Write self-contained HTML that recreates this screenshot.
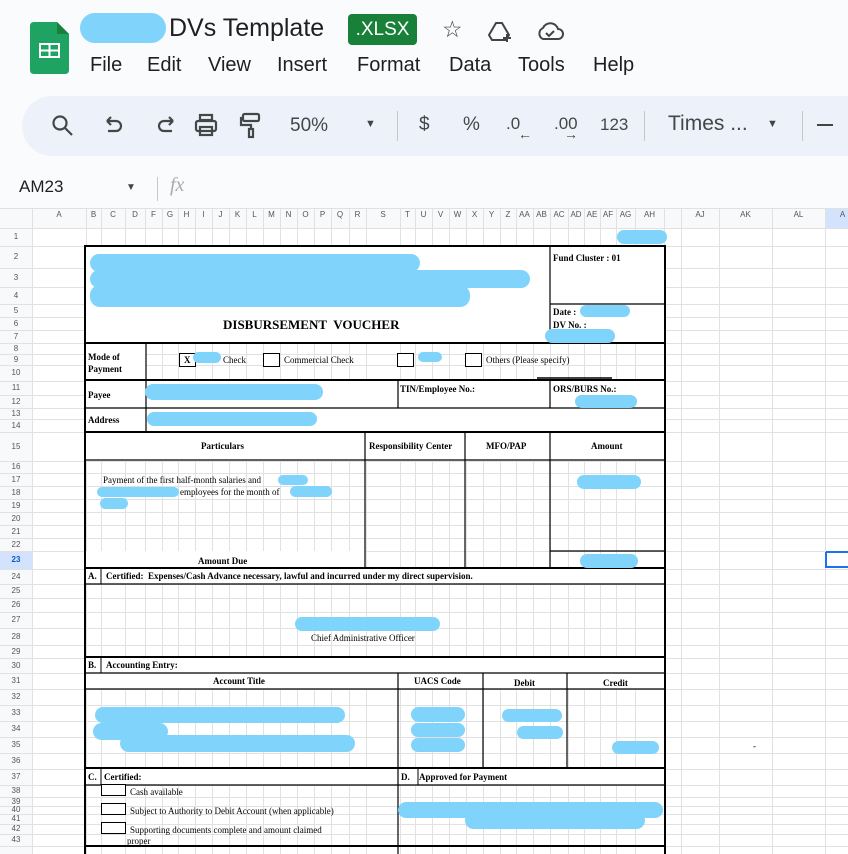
<!DOCTYPE html>
<html><head><meta charset="utf-8"><style>
*{margin:0;padding:0;box-sizing:border-box}
body{width:848px;height:854px;overflow:hidden;background:#f9fbfd;font-family:"Liberation Sans",sans-serif;position:relative}
.a{position:absolute;white-space:nowrap}
.m{font-size:20px;color:#1f1f1f;top:54px}
.tb{font-size:19px;color:#444746;top:114px}
.s{font-family:"Liberation Serif",serif;font-size:9px;color:#000}
.b{font-weight:bold}
.blob{position:absolute;background:#80d4fb;border-radius:10px}
.ch{position:absolute;top:210px;font-size:8px;color:#555;text-align:center}
.rh{position:absolute;left:0;width:32px;font-size:8px;color:#555;text-align:center}
.cb{position:absolute;width:17px;height:14px;border:1px solid #000;background:#fff}
</style></head><body>
<svg class="a" style="left:30px;top:22px" width="39" height="52" viewBox="0 0 39 52"><path d="M4 0H27L39 12V48Q39 52 35 52H4Q0 52 0 48V4Q0 0 4 0Z" fill="#1ea362"/><path d="M27 0V12H39Z" fill="#188038"/><rect x="9" y="21" width="21" height="15" fill="#fff"/><rect x="11" y="23" width="7.5" height="4.5" fill="#1ea362"/><rect x="20.5" y="23" width="7.5" height="4.5" fill="#1ea362"/><rect x="11" y="29.5" width="7.5" height="4.5" fill="#1ea362"/><rect x="20.5" y="29.5" width="7.5" height="4.5" fill="#1ea362"/></svg>
<div class="blob" style="left:80px;top:13px;width:86px;height:30px;border-radius:15px"></div>
<div class="a" style="left:169px;top:14px;font-size:25px;color:#1f1f1f">DVs Template</div>
<div class="a" style="left:348px;top:14px;width:69px;height:31px;background:#188038;border-radius:4px;color:#fff;font-size:19px;text-align:center;line-height:31px">.XLSX</div>
<div class="a" style="left:442px;top:16px;font-size:23px;color:#444">☆</div>
<svg class="a" style="left:487px;top:20px" width="28" height="24" viewBox="0 0 28 24" fill="none" stroke="#444" stroke-width="2"><path d="M9 3h6l7 12-3 5H5l-3-5z"/><path d="M20 14v8M16 18h8"/></svg>
<svg class="a" style="left:535px;top:20px" width="30" height="22" viewBox="0 0 30 22" fill="none" stroke="#444" stroke-width="2"><path d="M8 19h15a5 5 0 0 0 0-10 8 8 0 0 0-15-1 6 6 0 0 0 0 11z"/><path d="M11 13l3 3 5-5"/></svg>
<div class="a m" style="left:90px">File</div><div class="a m" style="left:147px">Edit</div><div class="a m" style="left:208px">View</div><div class="a m" style="left:277px">Insert</div><div class="a m" style="left:357px">Format</div><div class="a m" style="left:449px">Data</div><div class="a m" style="left:518px">Tools</div><div class="a m" style="left:593px">Help</div>
<div class="a" style="left:22px;top:96px;width:880px;height:60px;background:#edf2fa;border-radius:30px"></div>
<svg class="a" style="left:50px;top:112px" width="300" height="30" viewBox="0 0 300 28" fill="none" stroke="#444746" stroke-width="2.2">
<circle cx="10" cy="10" r="6.5"/><path d="M15 15l7 7"/>
<path d="M57 8h9a5 5 0 0 1 0 10h-8M57 8l4-4M57 8l4 4"/>
<path d="M123 8h-9a5 5 0 0 0 0 10h8M123 8l-4-4M123 8l-4 4"/>
<rect x="150" y="2" width="12" height="5"/><rect x="146" y="8" width="20" height="10" rx="2"/><rect x="150" y="14" width="12" height="8"/>
<rect x="193" y="1" width="16" height="7" rx="1.5"/><path d="M193 5h-2v7h10v4"/><rect x="199" y="16" width="4" height="8"/>
</svg>
<div class="a tb" style="left:290px;top:115px">50%</div>
<div class="a" style="left:365px;top:118px;font-size:11px;color:#444">▼</div>
<div class="a" style="left:397px;top:111px;width:1px;height:30px;background:#c7c7c7"></div>
<div class="a tb" style="left:419px">$</div><div class="a tb" style="left:463px">%</div>
<div class="a tb" style="left:506px;font-size:17px">.0</div><div class="a" style="left:518px;top:126px;font-size:14px;color:#444">←</div>
<div class="a tb" style="left:554px;font-size:17px">.00</div><div class="a" style="left:564px;top:126px;font-size:14px;color:#444">→</div>
<div class="a tb" style="left:600px;font-size:17px;top:115px">123</div>
<div class="a" style="left:644px;top:111px;width:1px;height:30px;background:#c7c7c7"></div>
<div class="a tb" style="left:668px;font-size:21px;top:112px">Times ...</div>
<div class="a" style="left:767px;top:118px;font-size:11px;color:#444">▼</div>
<div class="a" style="left:802px;top:111px;width:1px;height:30px;background:#c7c7c7"></div>
<div class="a" style="left:817px;top:124px;width:16px;height:2px;background:#444"></div>
<div class="a" style="left:19px;top:177px;font-size:17px;color:#1f1f1f">AM23</div>
<div class="a" style="left:126px;top:182px;font-size:10px;color:#444">▼</div>
<div class="a" style="left:157px;top:177px;width:1px;height:24px;background:#c7c7c7"></div>
<div class="a" style="left:170px;top:174px;font-size:20px;color:#aaa;font-family:'Liberation Serif',serif;font-style:italic">fx</div>
<div class="a" style="left:0;top:208px;width:848px;height:646px;background:#fff"></div>
<div class="a" style="left:0;top:208px;width:848px;height:20px;background:#f8f9fa"></div>
<div class="a" style="left:0;top:208px;width:32px;height:646px;background:#f8f9fa"></div>
<div class="a" style="left:825px;top:208px;width:23px;height:20px;background:#d3e3fd"></div>
<div class="a" style="left:0;top:551px;width:32px;height:18px;background:#d3e3fd"></div>
<svg class="a" style="left:0;top:0" width="848" height="854" id="g"></svg>
<script>
var xs=[32,86,101,125,145,162,178,195,212,229,246,263,280,297,314,331,349,366,400,415,432,449,466,483,500,516,533,550,568,584,600,616,635,664,681,719,772,825];
var ys=[208,228,246,268,287,304,317,330,343,354,365,381,395,408,419,432,461,473,486,499,512,525,538,551,569,584,598,612,628,645,658,673,689,705,721,737,753,769,785,797,806,814,824,834,846];
var s='';xs.forEach(function(x){s+='<line x1="'+(x+.5)+'" y1="208" x2="'+(x+.5)+'" y2="854" stroke="#e1e1e1"/>'});
ys.forEach(function(y){s+='<line x1="0" y1="'+(y+.5)+'" x2="848" y2="'+(y+.5)+'" stroke="#e1e1e1"/>'});
var W=[[86,246,464,97],[550,246,115,58],[550,304,115,39],[86,343,60,37],[86,381,579,51],[86,432,579,29],[86,551,279,17],[86,569,579,15],[86,658,579,31],[86,769,579,16]];
W.forEach(function(r){s+='<rect x="'+r[0]+'" y="'+r[1]+'" width="'+r[2]+'" height="'+r[3]+'" fill="#fff"/>'});
function L(x1,y1,x2,y2,w,c){s+='<line x1="'+x1+'" y1="'+y1+'" x2="'+x2+'" y2="'+y2+'" stroke="'+(c||'#000')+'" stroke-width="'+w+'"/>'}
L(85,246,666,246,2);L(85,245,85,854,2);L(665,245,665,854,2);
[343,380,432,568,657,768,846].forEach(function(y){L(85,y,666,y,2)});
L(550,246,550,343,1.2);L(550,304,666,304,1.2);
L(146,343,146,432,1.2);L(398,380,398,408,1.2);L(550,380,550,408,1.2);L(85,408,666,408,1.2);
L(365,432,365,568,1.2);L(465,432,465,568,1.2);L(550,432,550,568,1.2);L(85,460,666,460,1.2);L(550,551,666,551,1.2);
L(85,584,666,584,1.2);L(101,568,101,584,1);
L(85,673,666,673,1.2);L(101,657,101,673,1);L(85,689,666,689,1.2);
L(398,673,398,768,1.2);L(483,673,483,768,1.2);L(567,673,567,768,1.2);
L(85,785,666,785,1.2);L(398,768,398,854,1.2);L(101,768,101,785,1);L(418,768,418,785,1);
L(537,378,612,378,1.5);
var B='#1a73e8';L(826,552,848,552,2,B);L(826,552,826,568,2,B);L(826,567,848,567,2,B);
document.getElementById('g').innerHTML=s;
var cols=[['A',32,86],['B',86,101],['C',101,125],['D',125,145],['F',145,162],['G',162,178],['H',178,195],['I',195,212],['J',212,229],['K',229,246],['L',246,263],['M',263,280],['N',280,297],['O',297,314],['P',314,331],['Q',331,349],['R',349,366],['S',366,400],['T',400,415],['U',415,432],['V',432,449],['W',449,466],['X',466,483],['Y',483,500],['Z',500,516],['AA',516,533],['AB',533,550],['AC',550,568],['AD',568,584],['AE',584,600],['AF',600,616],['AG',616,635],['AH',635,664],['AJ',681,719],['AK',719,772],['AL',772,825],['A',825,860]];
var h='';cols.forEach(function(c){h+='<div class="ch" style="left:'+c[1]+'px;width:'+(c[2]-c[1])+'px">'+c[0]+'</div>'});
for(var i=1;i<=43;i++){var t=ys[i],b=ys[i+1];h+='<div class="rh" style="top:'+((t+b)/2-5)+'px;'+(i==23?'color:#0b57d0;font-weight:bold':'')+'">'+i+'</div>'}
document.body.insertAdjacentHTML('beforeend',h);
</script>
<div class="blob" style="left:617px;top:230px;width:50px;height:14px"></div>
<div class="blob" style="left:90px;top:254px;width:330px;height:18px"></div>
<div class="blob" style="left:90px;top:270px;width:440px;height:18px"></div>
<div class="blob" style="left:90px;top:285px;width:380px;height:22px"></div>
<div class="a s b" style="left:553px;top:253px">Fund Cluster : 01</div>
<div class="a s b" style="left:223px;top:317px;font-size:13px">DISBURSEMENT&nbsp; VOUCHER</div>
<div class="a s b" style="left:553px;top:307px">Date :</div>
<div class="blob" style="left:580px;top:305px;width:50px;height:12px"></div>
<div class="a s b" style="left:553px;top:320px">DV No. :</div>
<div class="blob" style="left:545px;top:329px;width:70px;height:14px"></div>
<div class="a s b" style="left:88px;top:351px;line-height:12px">Mode of<br>Payment</div>
<div class="cb" style="left:179px;top:353px"></div><div class="a s b" style="left:184px;top:355px">X</div>
<div class="blob" style="left:193px;top:352px;width:28px;height:11px"></div>
<div class="a s" style="left:223px;top:355px">Check</div>
<div class="cb" style="left:263px;top:353px"></div><div class="a s" style="left:284px;top:355px">Commercial Check</div>
<div class="cb" style="left:397px;top:353px"></div><div class="blob" style="left:418px;top:352px;width:24px;height:10px"></div>
<div class="cb" style="left:465px;top:353px"></div><div class="a s" style="left:486px;top:355px">Others (Please specify)</div>
<div class="a s b" style="left:88px;top:390px">Payee</div>
<div class="blob" style="left:145px;top:384px;width:178px;height:16px"></div>
<div class="a s b" style="left:400px;top:384px">TIN/Employee No.:</div>
<div class="a s b" style="left:553px;top:384px">ORS/BURS No.:</div>
<div class="blob" style="left:575px;top:395px;width:62px;height:13px"></div>
<div class="a s b" style="left:88px;top:415px">Address</div>
<div class="blob" style="left:147px;top:412px;width:170px;height:14px"></div>
<div class="a s b" style="left:201px;top:441px">Particulars</div>
<div class="a s b" style="left:369px;top:441px">Responsibility Center</div>
<div class="a s b" style="left:486px;top:441px">MFO/PAP</div>
<div class="a s b" style="left:591px;top:441px">Amount</div>
<div class="a s" style="left:103px;top:475px">Payment of the first half-month salaries and &nbsp; &nbsp; &nbsp; &nbsp; &nbsp; of</div>
<div class="blob" style="left:278px;top:475px;width:30px;height:10px"></div>
<div class="a s" style="left:180px;top:487px">employees for the month of</div>
<div class="blob" style="left:97px;top:487px;width:82px;height:10px"></div>
<div class="blob" style="left:290px;top:486px;width:42px;height:11px"></div>
<div class="blob" style="left:100px;top:498px;width:28px;height:11px"></div>
<div class="blob" style="left:577px;top:475px;width:64px;height:14px"></div>
<div class="a s b" style="left:198px;top:556px">Amount Due</div>
<div class="blob" style="left:580px;top:554px;width:58px;height:14px"></div>
<div class="a s b" style="left:88px;top:571px">A.</div>
<div class="a s b" style="left:106px;top:571px">Certified:&nbsp; Expenses/Cash Advance necessary, lawful and incurred under my direct supervision.</div>
<div class="blob" style="left:295px;top:617px;width:145px;height:14px"></div>
<div class="a s" style="left:311px;top:633px">Chief Administrative Officer</div>
<div class="a s b" style="left:88px;top:660px">B.</div><div class="a s b" style="left:106px;top:660px">Accounting Entry:</div>
<div class="a s b" style="left:213px;top:676px">Account Title</div>
<div class="a s b" style="left:414px;top:676px">UACS Code</div>
<div class="a s b" style="left:514px;top:678px">Debit</div>
<div class="a s b" style="left:603px;top:678px">Credit</div>
<div class="blob" style="left:95px;top:707px;width:250px;height:16px"></div>
<div class="blob" style="left:93px;top:723px;width:75px;height:17px"></div>
<div class="blob" style="left:120px;top:735px;width:235px;height:17px"></div>
<div class="blob" style="left:411px;top:707px;width:54px;height:15px"></div>
<div class="blob" style="left:411px;top:723px;width:54px;height:14px"></div>
<div class="blob" style="left:411px;top:738px;width:54px;height:14px"></div>
<div class="blob" style="left:502px;top:709px;width:60px;height:13px"></div>
<div class="blob" style="left:517px;top:726px;width:46px;height:13px"></div>
<div class="blob" style="left:612px;top:741px;width:47px;height:13px"></div>
<div class="a s b" style="left:88px;top:772px">C.</div><div class="a s b" style="left:104px;top:772px">Certified:</div>
<div class="a s b" style="left:401px;top:772px">D.</div><div class="a s b" style="left:419px;top:772px">Approved for Payment</div>
<div class="cb" style="left:101px;top:784px;width:25px;height:12px"></div><div class="a s" style="left:130px;top:787px">Cash available</div>
<div class="cb" style="left:101px;top:803px;width:25px;height:12px"></div><div class="a s" style="left:130px;top:806px">Subject to Authority to Debit Account (when applicable)</div>
<div class="cb" style="left:101px;top:822px;width:25px;height:12px"></div><div class="a s" style="left:130px;top:825px">Supporting documents complete and amount claimed</div>
<div class="a s" style="left:127px;top:836px">proper</div>
<div class="blob" style="left:398px;top:802px;width:265px;height:16px"></div>
<div class="blob" style="left:465px;top:812px;width:180px;height:17px"></div>
<div class="a s" style="left:753px;top:741px">-</div>
</body></html>
